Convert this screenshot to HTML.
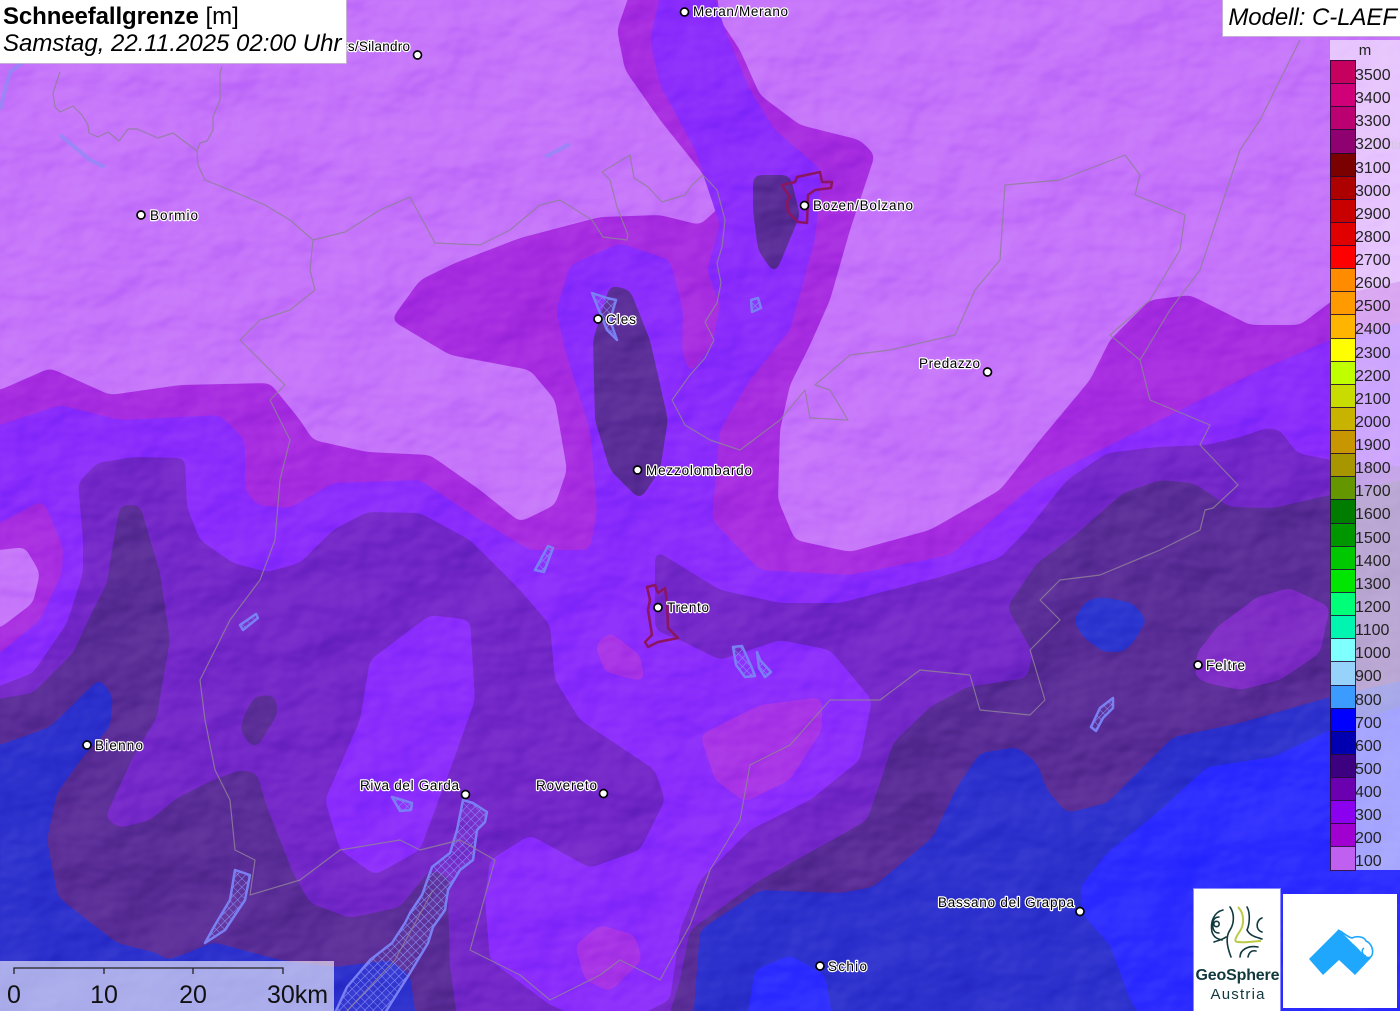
<!DOCTYPE html>
<html lang="de"><head><meta charset="utf-8"><title>Schneefallgrenze</title>
<style>
html,body{margin:0;padding:0;width:1400px;height:1011px;overflow:hidden;background:#8a2cf0}
svg{position:absolute;left:0;top:0;display:block}
.z polygon{filter:url(#r)}
.lab text{font:13.5px "Liberation Sans",sans-serif;fill:#000;stroke:#fff;stroke-width:2.4px;paint-order:stroke;stroke-linejoin:round}
.dot circle{fill:#fff;stroke:#000;stroke-width:1.7}
.bd{fill:none;stroke:#8f7f9a;stroke-width:1.2;stroke-linejoin:round;opacity:.85}
.lake{stroke:#7a80f4;stroke-width:2.5;fill:url(#h);stroke-linejoin:round}
.city{fill:none;stroke:#8a1560;stroke-width:2.5;stroke-linejoin:round}
.box{position:absolute;background:#fff;font-family:"Liberation Sans",sans-serif;color:#000}
#leg{position:absolute;left:1330px;top:40px;width:70px;height:830px;background:rgba(255,255,255,.58);font:16px "Liberation Sans",sans-serif;color:#222}
#leg .m{position:absolute;left:0;width:70px;top:2px;text-align:center;font-size:15px}
#leg i{position:absolute;left:0;width:24px;height:22.13px;border:.5px solid rgba(30,10,50,.85);font-style:normal;box-sizing:content-box}
#leg b{position:absolute;left:25px;font-weight:normal;line-height:23px}
</style></head><body>
<svg width="1400" height="1011" viewBox="0 0 1400 1011" xmlns="http://www.w3.org/2000/svg">
<defs>
<filter id="r" filterUnits="userSpaceOnUse" x="-100" y="-100" width="1600" height="1300" color-interpolation-filters="sRGB">
<feGaussianBlur stdDeviation="4.5"/><feComponentTransfer><feFuncA type="linear" slope="22" intercept="-10.5"/></feComponentTransfer>
</filter>
<filter id="hs" filterUnits="userSpaceOnUse" x="0" y="0" width="1400" height="1011" color-interpolation-filters="sRGB">
<feTurbulence type="fractalNoise" baseFrequency="0.011 0.016" numOctaves="4" seed="11" result="n"/>
<feDiffuseLighting in="n" surfaceScale="13" diffuseConstant="0.72" lighting-color="#fff"><feDistantLight azimuth="225" elevation="48"/></feDiffuseLighting>
<feGaussianBlur stdDeviation="1.3"/>
</filter>
<pattern id="h" width="6" height="6" patternUnits="userSpaceOnUse" patternTransform="rotate(45)">
<rect width="6" height="6" fill="#ffffff" fill-opacity=".03"/><path d="M0 0H6M0 0V6" stroke="#8a90fb" stroke-width="1.1"/>
</pattern>
</defs>
<rect width="1400" height="1011" fill="#c574fa"/>
<g class="z">
<polygon fill="#a62ce0" points="-50,395 0,390 50,368 110,395 180,385 270,383 300,420 313,440 367,452 430,455 480,490 520,522 555,505 567,470 555,400 530,370 450,355 391,320 420,280 455,263 520,238 600,217 660,215 700,225 722,205 700,170 660,120 625,70 617,30 645,-50 712,-50 720,20 740,50 760,95 800,125 860,140 875,155 850,230 830,300 810,345 790,385 780,430 778,500 795,540 850,552 930,530 1000,490 1040,440 1090,380 1110,340 1150,300 1190,295 1250,325 1300,325 1340,295 1450,270 1450,1060 -50,1060"/>
<polygon fill="#8a2cfb" points="-50,440 0,425 60,405 120,420 220,415 245,440 245,490 257,505 290,508 333,483 420,480 480,520 530,550 590,550 597,510 590,430 565,350 556,310 570,265 620,243 670,260 683,310 682,350 690,375 712,345 720,305 707,270 720,225 695,150 660,85 650,40 670,-50 700,-50 725,30 750,90 775,130 822,170 815,240 790,330 750,380 720,430 712,520 760,570 850,575 950,555 1040,480 1100,450 1170,415 1260,370 1330,340 1450,310 1450,1060 -50,1060"/>
<polygon fill="#a62ce0" points="-50,530 0,523 43,500 63,547 62,573 40,620 0,653 -50,660"/>
<polygon fill="#c574fa" points="-50,550 0,550 25,547 40,573 33,603 0,628 -50,630"/>
<polygon fill="#7327c8" points="-50,705 33,673 67,623 83,573 83,540 78,483 97,463 133,457 185,458 187,507 200,540 233,563 267,572 300,563 333,530 367,512 420,513 470,540 520,590 550,625 555,680 580,720 655,770 665,800 640,850 590,868 530,835 490,860 485,900 490,960 550,1005 610,1030 670,1000 680,930 700,880 750,830 810,800 860,760 872,700 830,650 780,640 720,660 680,640 655,630 655,550 720,590 780,603 840,603 940,577 1000,558 1027,530 1067,480 1107,453 1157,447 1207,445 1240,437 1267,428 1280,430 1297,453 1340,462 1450,470 1450,1060 -50,1060"/>
<polygon fill="#8a2cfb" points="370,660 430,615 470,620 475,700 450,770 420,850 375,875 340,850 325,800 360,720"/>
<polygon fill="#592c96" points="-50,707 33,693 73,653 93,610 107,583 112,550 120,505 140,505 160,573 170,640 160,697 157,717 133,757 105,818 120,828 150,820 177,798 213,780 240,770 257,773 267,807 293,873 310,903 350,918 400,907 430,870 450,877 448,897 450,967 463,1060 -50,1060"/>
<polygon fill="#592c96" points="593,340 610,285 630,290 650,340 668,420 660,470 640,500 610,470 595,420"/>
<polygon fill="#592c96" points="753,175 790,175 800,215 775,275 758,250 753,210"/>
<polygon fill="#592c96" points="255,696 275,695 278,713 257,748 250,745 240,730 245,713"/>
<polygon fill="#592c96" points="655,1060 680,980 690,930 760,880 850,830 867,820 880,783 893,743 930,707 967,687 1027,678 1033,653 1007,607 1037,563 1073,537 1123,493 1160,480 1193,483 1230,507 1273,508 1330,495 1450,470 1450,1060"/>
<polygon fill="#7d2bc4" points="1195,677 1197,653 1217,627 1257,597 1290,588 1330,607 1320,653 1280,680 1240,690 1207,683"/>
<polygon fill="#2c35cf" points="1073,620 1087,600 1103,597 1133,603 1147,620 1133,643 1123,652 1103,652 1083,637"/>
<polygon fill="#a633e6" points="595,645 610,632 640,655 645,682 605,672"/>
<polygon fill="#a633e6" points="700,735 760,705 822,697 822,730 790,780 745,802 715,780"/>
<polygon fill="#a633e6" points="575,945 600,925 635,935 642,960 610,992 585,980"/>
<polygon fill="#2c30cc" points="-50,745 0,745 50,727 100,678 113,697 110,727 83,757 57,793 47,840 58,897 117,943 157,953 167,960 187,953 213,942 280,960 335,967 390,960 410,975 422,1060 -50,1060"/>
<polygon fill="#2c30cc" points="690,1060 700,930 760,890 840,893 873,887 933,837 957,787 980,753 1017,747 1037,763 1047,790 1067,813 1107,803 1140,770 1173,737 1240,723 1330,697 1450,670 1450,1060"/>
<polygon fill="#2c2cff" points="1080,887 1107,853 1157,813 1207,767 1273,757 1330,730 1450,690 1450,1060 1170,1060 1130,1000 1110,945 1083,915"/>
<polygon fill="#2c2cff" points="740,1060 755,970 790,955 825,975 840,1060"/>
</g>
<rect width="1400" height="1011" filter="url(#hs)" style="mix-blend-mode:soft-light" opacity=".4"/>
<g class="lake">
<polygon points="463,800 473,803 487,812 485,822 477,830 473,860 460,870 448,890 445,910 433,927 428,943 410,973 393,1000 385,1013 335,1013 347,987 370,960 392,943 405,923 410,913 422,895 432,867 450,853 457,830"/>
<polygon points="235,870 250,875 245,900 225,930 205,943 215,925 230,900"/>
<polygon points="733,647 742,646 752,668 755,676 745,677 736,665"/>
<polygon points="757,652 760,660 771,672 765,677 759,668"/>
<polygon points="1113,698 1113,708 1103,718 1096,731 1091,727 1100,708"/>
<polygon points="392,797 412,803 411,810 400,811"/>
<polygon points="592,293 607,298 616,300 610,320 617,340 607,330"/>
<polygon points="751,300 758,298 761,308 752,312"/>
<polygon points="548,546 553,548 544,572 535,570"/>
<polygon points="240,625 256,614 258,618 243,630"/>
</g>
<path d="M0 110L10 72L28 58M60 135L90 160L105 167M545 157L570 144" fill="none" stroke="#8b8cf5" stroke-width="4" opacity=".7"/>
<g class="bd">
<path d="M60,72 53,93 55,107 60,112 73,106 82,115 88,125 89,133 98,137 108,132 119,141 128,129 137,129 158,138 173,133 197,151 200,143 207,141 213,130 213,117 220,100 220,73 222,66"/>
<path d="M197,151 198,165 205,180 225,188 265,205 290,220 313,240 345,232 380,210 410,197 435,243 480,245 510,230 540,205 560,200 592,220 603,237 627,240 628,235 617,207 610,180 602,172 630,155 634,178 648,187 662,202 685,195 692,185 703,175 717,190 725,220 722,247 717,263 721,283 717,303 705,322 714,340 705,358 690,375 672,400 685,425 710,440 740,450 780,420 805,390 810,418 848,420 830,390 815,385 850,355 890,350 955,335 975,290 1000,260 1005,185 1060,180 1125,155 1140,175 1135,195 1185,215 1180,250 1150,300 1110,335 1140,360 1150,400 1210,425 1200,445 1238,485 1213,508 1205,510 1200,530 1160,550 1100,575 1060,580 1040,600 1060,620 1030,650 1045,700 1030,715 980,710 970,675 920,670 880,700 830,700 790,745 750,765 740,820 710,870 690,925 660,980 620,960 600,975 550,1000 520,975 470,950 495,860 460,840 420,850 400,840 340,850 300,880 250,895 255,860 235,850 230,800 215,770 205,720 200,680 215,650 230,620 260,580 275,540 280,480 290,440 270,400 285,385 240,340 260,320 290,310 315,290 310,270 313,240"/>
<path d="M1140,360 1170,310 1200,270 1240,150 1260,120 1290,60 1300,40"/>
<path d="M433,890 395,960 345,1013"/>
</g>
<g class="city">
<polygon points="782,185 795,182 797,177 820,172 822,182 832,182 831,188 815,190 808,195 807,223 798,222 788,212 787,202 790,197 783,187"/>
<polygon points="647,587 655,585 658,593 665,588 667,603 668,628 678,638 658,642 648,647 645,642 652,635 648,610 650,600"/>
</g>
<g class="lab">
<text x="693" y="16" textLength="95">Meran/Merano</text>
<text x="285" y="51" textLength="125">Schlanders/Silandro</text>
<text x="150" y="220" textLength="48">Bormio</text>
<text x="813" y="210" textLength="100">Bozen/Bolzano</text>
<text x="606" y="324" textLength="30">Cles</text>
<text x="919" y="368" textLength="61">Predazzo</text>
<text x="646" y="475" textLength="106">Mezzolombardo</text>
<text x="667" y="612" textLength="42">Trento</text>
<text x="1206" y="670" textLength="39">Feltre</text>
<text x="95" y="750" textLength="48">Bienno</text>
<text x="360" y="790" textLength="99">Riva del Garda</text>
<text x="536" y="790" textLength="61">Rovereto</text>
<text x="938" y="907" textLength="136">Bassano del Grappa</text>
<text x="828" y="971" textLength="39">Schio</text>
</g>
<g class="dot">
<circle cx="684.5" cy="12" r="4"/><circle cx="417.5" cy="55" r="4"/><circle cx="141" cy="215" r="4"/><circle cx="804.5" cy="205.5" r="4"/><circle cx="598" cy="319" r="4"/><circle cx="987.5" cy="372" r="4"/><circle cx="637.5" cy="470" r="4"/><circle cx="658" cy="607.5" r="4"/><circle cx="1198" cy="665" r="4"/><circle cx="87" cy="745" r="4"/><circle cx="465.5" cy="794.5" r="4"/><circle cx="603.5" cy="793.5" r="4"/><circle cx="1080" cy="911.5" r="4"/><circle cx="820" cy="966" r="4"/>
</g>
<rect x="0" y="961" width="334" height="50" fill="#fff" fill-opacity=".6"/>
<path d="M14 974V968H283V974M104 968V974M193 968V974" fill="none" stroke="#222" stroke-width="1.3"/>
<g font-family="Liberation Sans,sans-serif" font-size="25" fill="#111">
<text x="14" y="1003" text-anchor="middle">0</text>
<text x="104" y="1003" text-anchor="middle">10</text>
<text x="193" y="1003" text-anchor="middle">20</text>
<text x="267" y="1003">30km</text>
</g>
<text x="1370" y="149" font-family="Liberation Sans,sans-serif" font-size="13" fill="#777" opacity=".5">Cortina</text>
</svg>

<div class="box" style="left:0;top:0;width:346px;height:63px;box-shadow:0 0 0 1px rgba(200,200,200,.7)">
<div style="position:absolute;left:3px;top:3px;font-size:24px;line-height:28px;white-space:nowrap"><b style="letter-spacing:-.1px">Schneefallgrenze</b> [m]</div>
<div style="position:absolute;left:3px;top:30px;font-size:24px;line-height:28px;font-style:italic;white-space:nowrap">Samstag, 22.11.2025 02:00 Uhr</div>
</div>
<div class="box" style="left:1223px;top:0;width:177px;height:36px;box-shadow:0 0 0 1px rgba(200,200,200,.7)">
<div style="position:absolute;right:3px;top:4px;font-size:24px;line-height:28px;font-style:italic;white-space:nowrap;letter-spacing:-.05px">Modell: C-LAEF</div>
</div>

<div id="leg"><div class="m">m</div>
<i style="top:20px;background:#c6005e"></i><b style="top:24px">3500</b>
<i style="top:43.13px;background:#cf0078"></i><b style="top:47.13px">3400</b>
<i style="top:66.26px;background:#bb0072"></i><b style="top:70.26px">3300</b>
<i style="top:89.39px;background:#8f0070"></i><b style="top:93.39px">3200</b>
<i style="top:112.52px;background:#7b0000"></i><b style="top:116.52px">3100</b>
<i style="top:135.65px;background:#ad0000"></i><b style="top:139.65px">3000</b>
<i style="top:158.78px;background:#c80000"></i><b style="top:162.78px">2900</b>
<i style="top:181.91px;background:#e00000"></i><b style="top:185.91px">2800</b>
<i style="top:205.04px;background:#ff0000"></i><b style="top:209.04px">2700</b>
<i style="top:228.17px;background:#ff8c00"></i><b style="top:232.17px">2600</b>
<i style="top:251.3px;background:#ff9a00"></i><b style="top:255.3px">2500</b>
<i style="top:274.43px;background:#ffb400"></i><b style="top:278.43px">2400</b>
<i style="top:297.56px;background:#ffff00"></i><b style="top:301.56px">2300</b>
<i style="top:320.69px;background:#c0ff00"></i><b style="top:324.69px">2200</b>
<i style="top:343.82px;background:#c8dc00"></i><b style="top:347.82px">2100</b>
<i style="top:366.95px;background:#c8b400"></i><b style="top:370.95px">2000</b>
<i style="top:390.08px;background:#c89600"></i><b style="top:394.08px">1900</b>
<i style="top:413.21px;background:#a89600"></i><b style="top:417.21px">1800</b>
<i style="top:436.34px;background:#649600"></i><b style="top:440.34px">1700</b>
<i style="top:459.47px;background:#007d00"></i><b style="top:463.47px">1600</b>
<i style="top:482.6px;background:#009600"></i><b style="top:486.6px">1500</b>
<i style="top:505.73px;background:#00c800"></i><b style="top:509.73px">1400</b>
<i style="top:528.86px;background:#00e600"></i><b style="top:532.86px">1300</b>
<i style="top:551.99px;background:#00ff78"></i><b style="top:555.99px">1200</b>
<i style="top:575.12px;background:#00f5b0"></i><b style="top:579.12px">1100</b>
<i style="top:598.25px;background:#80ffff"></i><b style="top:602.25px">1000</b>
<i style="top:621.38px;background:#96d2fa"></i><b style="top:625.38px">900</b>
<i style="top:644.51px;background:#3c9bff"></i><b style="top:648.51px">800</b>
<i style="top:667.64px;background:#0000ff"></i><b style="top:671.64px">700</b>
<i style="top:690.77px;background:#0000b0"></i><b style="top:694.77px">600</b>
<i style="top:713.9px;background:#3c0080"></i><b style="top:717.9px">500</b>
<i style="top:737.03px;background:#6a00b0"></i><b style="top:741.03px">400</b>
<i style="top:760.16px;background:#8c00f0"></i><b style="top:764.16px">300</b>
<i style="top:783.29px;background:#a000d0"></i><b style="top:787.29px">200</b>
<i style="top:806.42px;background:#c060f0"></i><b style="top:810.42px">100</b>
</div>

<div class="box" style="left:1194px;top:889px;width:86px;height:122px;box-shadow:0 0 0 1px rgba(200,200,255,.6)"></div>
<div class="box" style="left:1283px;top:894px;width:114px;height:114px"></div>
<svg width="1400" height="1011" viewBox="0 0 1400 1011" xmlns="http://www.w3.org/2000/svg" style="pointer-events:none">
<g fill="none" stroke="#10383d" stroke-width="1.6" stroke-linecap="round">
<circle cx="1216.5" cy="924" r="2.7"/>
<path d="M1219,917C1213,917 1212,923 1213,928C1214,932 1216,933 1219,933"/>
<path d="M1223,910C1214,912 1210,922 1212,932C1214,938 1218,939 1222,940"/>
<path d="M1230,907C1235,914 1234,924 1230,930C1226,936 1226,944 1231,957"/>
<path d="M1247,907C1251,914 1249,926 1247,930C1250,936 1256,937 1262,939"/>
<path d="M1262,918C1256,920 1255,930 1262,932"/>
<path d="M1240,957C1240,950 1248,945 1258,947"/>
<path d="M1248,957C1249,952 1252,950 1256,951"/>
<path d="M1214,942C1219,940 1222,940 1226,937"/>
</g>
<path d="M1238,907C1245,914 1244,925 1240,931C1236,937 1233,942 1238,942C1245,943 1255,941 1261,941" fill="none" stroke="#bccb45" stroke-width="2"/>
<text x="1237.5" y="980" text-anchor="middle" font-family="Liberation Sans,sans-serif" font-size="16" font-weight="700" fill="#10383d" textLength="84">GeoSphere</text>
<text x="1237.5" y="999" text-anchor="middle" font-family="Liberation Sans,sans-serif" font-size="15" fill="#10383d" textLength="54">Austria</text>
<polygon points="1338,930 1309,959 1323,975 1339,960 1355,975 1371,958" fill="#1ea7fd"/>
<path d="M1338,930C1343,932 1347,937 1352,938C1356,936 1364,936 1366,941C1371,943 1374,950 1372,955C1371,958 1368,958 1366,957C1361,955 1358,948 1352,944Z" fill="#fff" stroke="#1ea7fd" stroke-width="1.6"/>
<path d="M1364,948C1361,950 1362,955 1366,956" fill="none" stroke="#1ea7fd" stroke-width="1.5"/>
</svg>
</body></html>
